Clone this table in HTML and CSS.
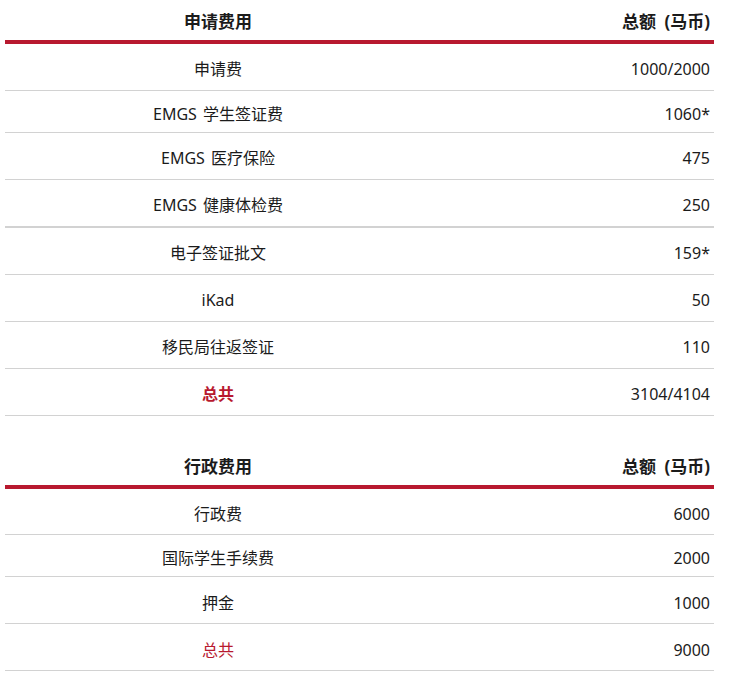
FILE: index.html
```html
<!DOCTYPE html>
<html lang="zh-CN">
<head>
<meta charset="utf-8">
<title>费用</title>
<link rel="stylesheet" href="styles.css">
</head>
<body>
<table class="fees">
  <thead>
    <tr><th class="name">申请费用</th><th class="amt">总额 (马币)</th></tr>
  </thead>
  <tbody>
    <tr class="first"><td class="name">申请费</td><td class="amt">1000/2000</td></tr>
    <tr class="short"><td class="name">EMGS 学生签证费</td><td class="amt">1060*</td></tr>
    <tr><td class="name">EMGS 医疗保险</td><td class="amt">475</td></tr>
    <tr class="thick"><td class="name">EMGS 健康体检费</td><td class="amt">250</td></tr>
    <tr><td class="name">电子签证批文</td><td class="amt">159*</td></tr>
    <tr><td class="name">iKad</td><td class="amt">50</td></tr>
    <tr><td class="name">移民局往返签证</td><td class="amt">110</td></tr>
    <tr><td class="name total bold">总共</td><td class="amt">3104/4104</td></tr>
  </tbody>
</table>

<table class="fees second">
  <thead>
    <tr><th class="name">行政费用</th><th class="amt">总额 (马币)</th></tr>
  </thead>
  <tbody>
    <tr class="first"><td class="name">行政费</td><td class="amt">6000</td></tr>
    <tr class="short"><td class="name">国际学生手续费</td><td class="amt">2000</td></tr>
    <tr><td class="name">押金</td><td class="amt">1000</td></tr>
    <tr><td class="name total">总共</td><td class="amt">9000</td></tr>
  </tbody>
</table>
</body>
</html>
```
FILE: styles.css
```css
html, body {
  margin: 0;
  padding: 0;
  background: #ffffff;
}

body {
  padding: 0 22px 0 5px;
  font-family: "Noto Sans", "Noto Sans CJK SC", sans-serif;
  font-size: 16px;
  color: #1b1b1b;
}

.fees {
  width: 709px;
  border-collapse: collapse;
  table-layout: fixed;
}

.fees.second {
  margin-top: 29px;
}

.fees th {
  height: 42px;
  padding: 1px 4px 0 4px;
  box-sizing: border-box;
  font-weight: 700;
  font-size: 17px;
  word-spacing: 4px;
  border-bottom: 4px solid #b8192f;
  vertical-align: middle;
}

.fees td {
  height: 47px;
  box-sizing: border-box;
  padding: 5px 4px 0 4px;
  border-bottom: 1px solid #d2d2d2;
  vertical-align: middle;
  line-height: 22px;
  word-spacing: 2px;
}

.fees tr.first td {
  height: 48px;
}

.fees tr.short td {
  height: 42px;
}

.fees tr.thick td {
  border-bottom: 2px solid #d2d2d2;
  height: 48px;
}

.name {
  width: 426px;
  text-align: center;
}

.amt {
  width: 283px;
  text-align: right;
}

.total {
  color: #b8192f;
}

.bold {
  font-weight: 700;
}
```
